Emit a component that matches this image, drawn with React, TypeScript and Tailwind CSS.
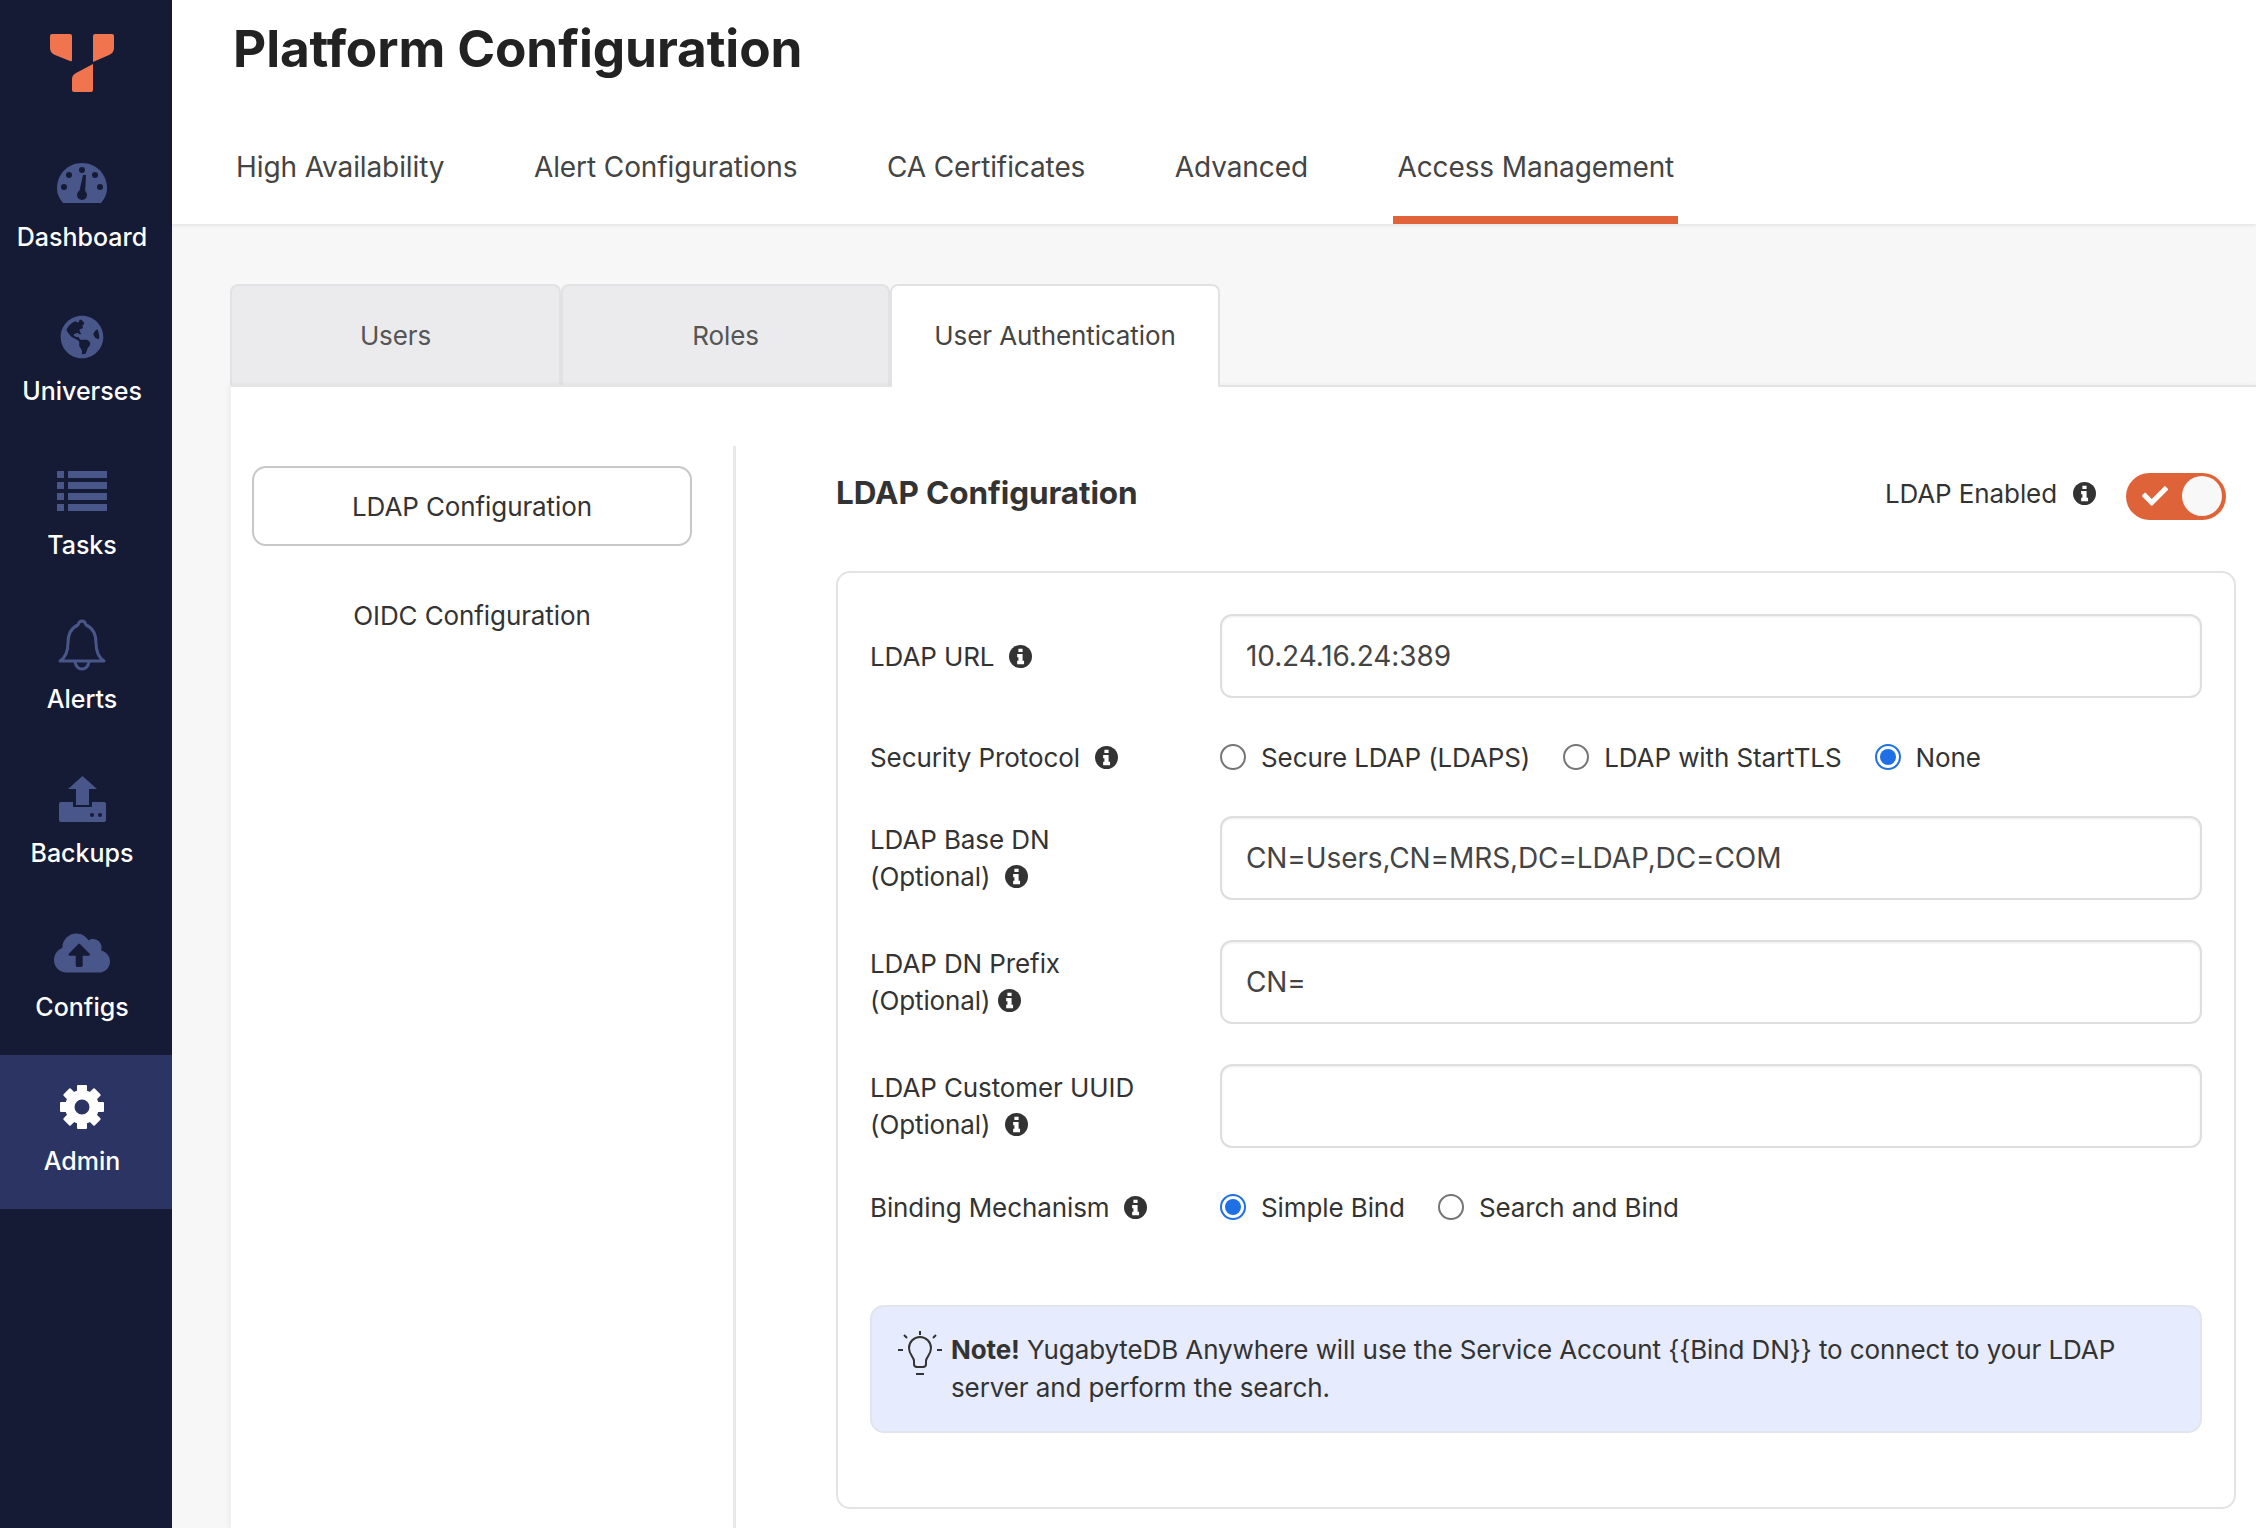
import type { ReactNode } from 'react'
import { FaCheck, FaCloudUploadAlt, FaGlobeAmericas } from 'react-icons/fa'

const topTabs = ['High Availability', 'Alert Configurations', 'CA Certificates', 'Advanced', 'Access Management']

function Logo() {
  return (
    <svg className="h-[58px] w-[64px]" viewBox="0 0 64 58" fill="#f0754f">
      <path d="M2 0h18q2 0 2 2v24q0 2-2 1L5 21q-5-2-5-7V2q0-2 2-2z" />
      <path d="M45 0h17q2 0 2 2v12q0 5-5 7L43 28V2q0-2 2-2z" />
      <path d="M43 30v26q0 2-2 2H24q-2 0-2-2V45q0-4 4-6z" />
    </svg>
  )
}

function GaugeIcon() {
  return (
    <svg className="h-[40px] w-[50px]" viewBox="0 0 50 40">
      <path d="M6 40C1 34 0 29 0 25 0 11 11 0 25 0s25 11 25 25c0 4-1 9-6 15z" fill="#48568a" />
      <g fill="#151a35">
        <circle cx="25" cy="7" r="3" />
        <circle cx="12" cy="12" r="3" />
        <circle cx="38" cy="12" r="3" />
        <circle cx="7" cy="24" r="3" />
        <circle cx="43" cy="24" r="3" />
        <circle cx="25" cy="32" r="5" />
        <path d="M22 30l4-18h3l-1 19z" />
      </g>
    </svg>
  )
}

function ListIcon() {
  return (
    <svg className="h-[40px] w-[50px]" viewBox="0 0 50 40" fill="#48568a">
      <rect x="0" y="0" width="7" height="7" />
      <rect x="11" y="0" width="39" height="7" />
      <rect x="0" y="11" width="7" height="7" />
      <rect x="11" y="11" width="39" height="7" />
      <rect x="0" y="22" width="7" height="7" />
      <rect x="11" y="22" width="39" height="7" />
      <rect x="0" y="33" width="7" height="7" />
      <rect x="11" y="33" width="39" height="7" />
    </svg>
  )
}

function BellIcon() {
  return (
    <svg className="h-[52px] w-[48px]" viewBox="0 0 48 52" fill="none" stroke="#48568a" strokeWidth="3">
      <path d="M2 42c6-4 8-10 8-18 0-9 3-15 10-18q1-4 4-4t4 4c7 3 10 9 10 18 0 8 2 14 8 18z" strokeLinejoin="round" />
      <path d="M17 43c1 5 4 7 7 7s6-2 7-7" />
    </svg>
  )
}

function BackupIcon() {
  return (
    <svg className="h-[46px] w-[47px]" viewBox="0 0 47 46" fill="#48568a">
      <path d="M23.5 0L38 13h-8v16H17V13H9z" />
      <path fillRule="evenodd" d="M2 26h12v5h19v-5h12q2 0 2 2v16q0 2-2 2H2q-2 0-2-2V28q0-2 2-2zM33 37a2 2 0 1 0 0 4 2 2 0 0 0 0-4zM41 37a2 2 0 1 0 0 4 2 2 0 0 0 0-4z" />
    </svg>
  )
}

function CogIcon() {
  return (
    <svg className="h-[44px] w-[44px]" viewBox="0 0 44 44" fill="white">
      <path
        fillRule="evenodd"
        d="M22 5a17 17 0 1 0 0 34 17 17 0 0 0 0-34zM22 14.5a7.5 7.5 0 1 1 0 15 7.5 7.5 0 0 1 0-15z"
      />
      {[0, 45, 90, 135, 180, 225, 270, 315].map((angle) => (
        <rect height="9" key={angle} rx="1" transform={`rotate(${angle} 22 22)`} width="10" x="17" y="0" />
      ))}
    </svg>
  )
}

function BulbIcon() {
  return (
    <svg className="h-[46px] w-[46px] shrink-0" viewBox="0 0 46 46" fill="none" stroke="#333" strokeWidth="2">
      <path d="M17 30c0-4-5-6-5-13a11 11 0 0 1 22 0c0 7-5 9-5 13v3q0 3-3 3h-6q-3 0-3-3z" />
      <path d="M19 43h8M23 0v4M7 4l3 3M39 4l-3 3M1 19h5M40 19h5" />
    </svg>
  )
}

const navItems: { label: string; icon: ReactNode; active?: boolean }[] = [
  { label: 'Dashboard', icon: <GaugeIcon /> },
  { label: 'Universes', icon: <FaGlobeAmericas className="text-[44px] text-[#48568a]" /> },
  { label: 'Tasks', icon: <ListIcon /> },
  { label: 'Alerts', icon: <BellIcon /> },
  { label: 'Backups', icon: <BackupIcon /> },
  { label: 'Configs', icon: <FaCloudUploadAlt className="text-[56px] text-[#48568a]" /> },
  { label: 'Admin', icon: <CogIcon />, active: true },
]

function Info() {
  return (
    <svg className="h-[23px] w-[23px] shrink-0" viewBox="0 0 22 22">
      <circle cx="11" cy="11" r="11" fill="#333" />
      <path d="M9 3.5h4v3.2H9zM7.8 8.5H13v6.6h1.4v3.2H7.8v-3.2H9v-3.4H7.8z" fill="white" />
    </svg>
  )
}

function Radio({ label, checked }: { label: string; checked?: boolean }) {
  return (
    <div className="flex items-center gap-[15px]">
      {checked ? (
        <span className="flex h-[26px] w-[26px] items-center justify-center rounded-full border-2 border-[#1f6fe5] bg-white">
          <span className="h-[16px] w-[16px] rounded-full bg-[#1f6fe5]" />
        </span>
      ) : (
        <span className="h-[26px] w-[26px] rounded-full border-2 border-[#757575] bg-white" />
      )}
      <span>{label}</span>
    </div>
  )
}

function TextField({ value }: { value: string }) {
  return (
    <input
      className="h-[84px] flex-1 rounded-[12px] border-2 border-[#dedede] bg-white px-[24px] text-[28px] text-[#444] shadow-[inset_0_1px_2px_rgba(0,0,0,0.08)] outline-none"
      readOnly
      value={value}
    />
  )
}

function FieldRow({ first, value, tight }: { first: string; value: string; tight?: boolean }) {
  return (
    <div className="flex items-center">
      <div className="w-[350px] leading-[37px]">
        <div>{first}</div>
        <div className={tight ? 'flex items-center gap-[8px]' : 'flex items-center gap-[15px]'}>
          (Optional)
          <Info />
        </div>
      </div>
      <TextField value={value} />
    </div>
  )
}

export default function App() {
  return (
    <div className="flex h-[1528px] overflow-hidden bg-[#f7f7f7] font-['Inter',sans-serif] text-[26px] tracking-[-0.1px] text-[#333]">
      {/* Sidebar */}
      <aside className="flex w-[172px] shrink-0 flex-col bg-[#151a35] tracking-normal">
        <div className="flex h-[131px] w-[164px] items-start justify-center pt-[34px]">
          <Logo />
        </div>
        {navItems.map((item) => (
          <div className={item.active ? 'h-[154px] bg-[#2b3463]' : 'h-[154px]'} key={item.label}>
            <div className="flex w-[164px] flex-col items-center pt-[27px]">
              <div className="flex h-[50px] items-center justify-center">{item.icon}</div>
              <div className="mt-[12px] text-[25px] font-medium leading-[34px] text-white">{item.label}</div>
            </div>
          </div>
        ))}
      </aside>

      <main className="flex min-w-0 flex-1 flex-col">
        {/* Header */}
        <header className="relative z-10 h-[224px] bg-white pl-[60px] shadow-[0_1px_4px_rgba(0,0,0,0.1)]">
          <h1 className="ml-[1px] flex h-[110px] items-start pt-[18px] text-[51.3px] font-bold leading-[60px] text-[#222]">
            Platform Configuration
          </h1>
          <nav className="flex gap-[81.5px]">
            {topTabs.map((tab) => (
              <div
                className={
                  tab === 'Access Management'
                    ? 'flex h-[114px] items-center border-b-8 border-[#e0633a] px-[4px] pt-[8px] text-[28px] text-[#444]'
                    : 'flex h-[114px] items-center border-b-8 border-transparent px-[4px] pt-[8px] text-[28px] text-[#444]'
                }
                key={tab}
              >
                {tab}
              </div>
            ))}
          </nav>
        </header>

        {/* Sub tabs */}
        <div className="ml-[58px] flex pt-[60px]">
          <div className="flex h-[101px] w-[331px] items-center justify-center rounded-t-[8px] border-2 border-b-0 border-[#e2e2e4] bg-[#ebebed] text-[#555]">
            Users
          </div>
          <div className="flex h-[101px] w-[329px] items-center justify-center rounded-t-[8px] border-2 border-b-0 border-[#e2e2e4] bg-[#ebebed] text-[#555]">
            Roles
          </div>
          <div className="relative z-10 flex h-[103px] w-[330px] items-center justify-center rounded-t-[8px] border-2 border-b-0 border-[#e2e2e4] bg-white pb-[2px] text-[#444]">
            User Authentication
          </div>
        </div>

        {/* Panel */}
        <section className="-mt-[2px] ml-[59px] flex flex-1 border-t-2 border-[#e4e4e4] bg-white pt-[59px] shadow-[-2px_0_6px_rgba(0,0,0,0.05)]">
          <div className="w-[502px] shrink-0 pl-[21px] pt-[20px]">
            <div className="flex h-[80px] w-[440px] items-center justify-center rounded-[14px] border-2 border-[#c8c8c8]">
              LDAP Configuration
            </div>
            <div className="mt-[29px] flex h-[80px] w-[440px] items-center justify-center">OIDC Configuration</div>
          </div>
          <div className="w-[3px] shrink-0 bg-[#e9e9e9]" />

          <div className="ml-[100px] mr-[20px] min-w-0 flex-1">
            <div className="mb-[31px] flex h-[94px] items-center justify-between">
              <h2 className="text-[31.5px] font-bold text-[#333]">LDAP Configuration</h2>
              <div className="flex items-center pr-[10px]">
                <span>LDAP Enabled</span>
                <span className="ml-[16px]">
                  <Info />
                </span>
                <div className="ml-[30px] mt-[6px] flex h-[47px] w-[100px] items-center justify-between rounded-full bg-[#de6339] pl-[16px] pr-[4px]">
                  <FaCheck className="text-[26px] text-white" />
                  <span className="h-[40px] w-[40px] rounded-full bg-[#f8f8f8]" />
                </div>
              </div>
            </div>

            {/* Form card */}
            <div className="rounded-[14px] border-2 border-[#e4e4e4] px-[32px] pb-[74px] pt-[41px]">
              <div className="flex items-center">
                <div className="flex w-[350px] items-center gap-[15px]">
                  LDAP URL
                  <Info />
                </div>
                <TextField value="10.24.16.24:389" />
              </div>

              <div className="flex h-[118px] items-center">
                <div className="flex w-[350px] items-center gap-[15px]">
                  Security Protocol
                  <Info />
                </div>
                <div className="flex items-center gap-[33px]">
                  <Radio label="Secure LDAP (LDAPS)" />
                  <Radio label="LDAP with StartTLS" />
                  <Radio checked label="None" />
                </div>
              </div>

              <div className="flex flex-col gap-[40px]">
                <FieldRow first="LDAP Base DN" value="CN=Users,CN=MRS,DC=LDAP,DC=COM" />
                <FieldRow first="LDAP DN Prefix" tight value="CN=" />
                <FieldRow first="LDAP Customer UUID" value="" />
              </div>

              <div className="flex h-[118px] items-center">
                <div className="flex w-[350px] items-center gap-[15px]">
                  Binding Mechanism
                  <Info />
                </div>
                <div className="flex items-center gap-[33px]">
                  <Radio checked label="Simple Bind" />
                  <Radio label="Search and Bind" />
                </div>
              </div>

              {/* Note */}
              <div className="mt-[39px] flex h-[128px] items-start gap-[8px] rounded-[14px] border-2 border-[#e2e4ee] bg-[#e6ebfd] pl-[25px] pt-[24px] leading-[38px]">
                <BulbIcon />
                <p className="max-w-[1230px]">
                  <strong className="font-bold">Note!</strong> YugabyteDB Anywhere will use the Service Account {'{{Bind DN}}'} to connect to your LDAP server and perform the search.
                </p>
              </div>
            </div>
          </div>
        </section>
      </main>
    </div>
  )
}
